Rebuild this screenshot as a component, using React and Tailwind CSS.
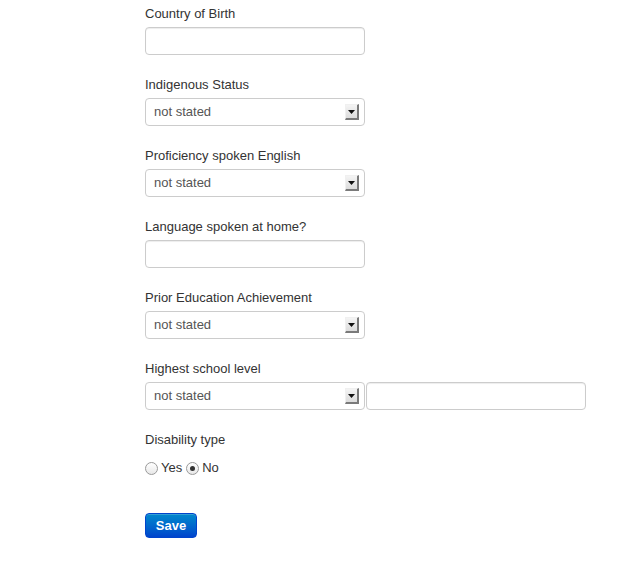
const font = { fontFamily: '"Liberation Sans", Arial, sans-serif' };

function Label({ children }) {
  return <div className="h-[21px] pt-[1px] leading-[20px] text-[13px] text-[#333] mb-[3px]">{children}</div>;
}

function TextInput({ className = '' }) {
  return (
    <div className={`h-[28px] w-[220px] bg-white border border-[#cccccc] rounded-[4px] shadow-[inset_0_1px_1px_rgba(0,0,0,0.075)] ${className}`} />
  );
}

function SelectBox() {
  return (
    <div className="h-[28px] w-[220px] bg-white border border-[#cccccc] rounded-[4px] flex items-center justify-between pl-[8px] pr-[5px]">
      <span className="text-[13px] text-[#555]">not stated</span>
      <div className="w-[14px] h-[16px] bg-gradient-to-b from-[#f4f4f4] to-[#dcdcdc] border-t border-l border-t-[#f0f0f0] border-l-[#f0f0f0] border-r-2 border-b-2 border-r-[#7a7a7a] border-b-[#7a7a7a] flex items-center justify-center">
        <svg width="7" height="4" viewBox="0 0 7 4">
          <path d="M0 0h7L3.5 4z" fill="#111" />
        </svg>
      </div>
    </div>
  );
}

function Radio({ checked }) {
  return (
    <span className="w-[13px] h-[13px] rounded-full border border-[#9a9a9a] bg-gradient-to-b from-white to-[#e8e8e8] flex items-center justify-center">
      {checked && <span className="w-[5px] h-[5px] rounded-full bg-[#333]" />}
    </span>
  );
}

function Group({ label, children }) {
  return (
    <div className="pb-[19px]">
      <Label>{label}</Label>
      {children}
    </div>
  );
}

export default function App() {
  return (
    <div className="min-h-[568px] w-[641px] bg-white pl-[145px] pt-[3px]" style={font}>
      <Group label="Country of Birth">
        <TextInput />
      </Group>
      <Group label="Indigenous Status">
        <SelectBox />
      </Group>
      <Group label="Proficiency spoken English">
        <SelectBox />
      </Group>
      <Group label="Language spoken at home?">
        <TextInput />
      </Group>
      <Group label="Prior Education Achievement">
        <SelectBox />
      </Group>
      <Group label="Highest school level">
        <div className="flex gap-[1px]">
          <SelectBox />
          <TextInput className="w-[219px]" />
        </div>
      </Group>
      <div>
        <Label>Disability type</Label>
        <div className="flex items-center h-[20px] mt-[8px] text-[13px] text-[#333]">
          <Radio />
          <span className="ml-[3px]">Yes</span>
          <span className="ml-[4px]" />
          <Radio checked />
          <span className="ml-[3px]">No</span>
        </div>
      </div>
      <button className="mt-[35px] h-[25px] w-[52px] rounded-[4px] border border-[#0044cc] bg-gradient-to-b from-[#0088cc] to-[#0044cc] text-white text-[13px] font-bold flex items-center justify-center shadow-[inset_0_1px_0_rgba(255,255,255,0.2)]">
        Save
      </button>
    </div>
  );
}
